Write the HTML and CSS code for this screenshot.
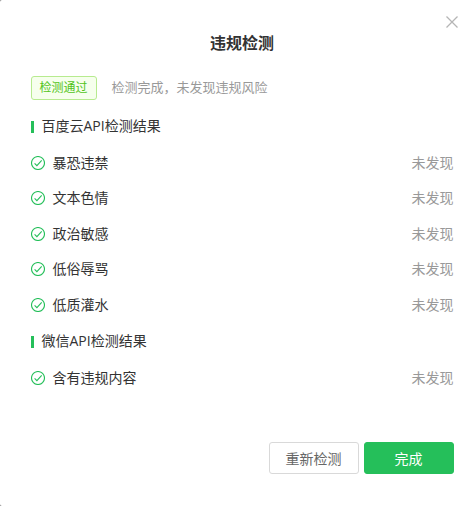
FILE: index.html
```html
<!DOCTYPE html>
<html lang="zh-CN">
<head>
    <meta charset="UTF-8">
    <meta name="viewport" content="width=device-width, initial-scale=1.0">
    <title>违规检测</title>
    <link rel="stylesheet" href="styles.css">
</head>
<body>
    <svg class="sprite" width="0" height="0">
        <symbol id="icon-check" viewBox="0 0 14 14">
            <circle cx="7" cy="7" r="6.5" />
            <path d="M3.6 7.3 L5.9 9.6 L10.7 4.4" />
        </symbol>
    </svg>

    <div class="modal">
        <button class="modal-close" aria-label="关闭">
            <svg width="12" height="12" viewBox="0 0 12 12"><path d="M0.5 0.5 L11.5 11.5 M11.5 0.5 L0.5 11.5" /></svg>
        </button>

        <h1 class="modal-title">违规检测</h1>

        <div class="summary">
            <span class="tag">检测通过</span>
            <span class="summary-text">检测完成，未发现违规风险</span>
        </div>

        <h2 class="section-title">百度云API检测结果</h2>
        <ul class="result-list">
            <li><svg class="icon"><use href="#icon-check" /></svg><span class="name">暴恐违禁</span><span class="status">未发现</span></li>
            <li><svg class="icon"><use href="#icon-check" /></svg><span class="name">文本色情</span><span class="status">未发现</span></li>
            <li><svg class="icon"><use href="#icon-check" /></svg><span class="name">政治敏感</span><span class="status">未发现</span></li>
            <li><svg class="icon"><use href="#icon-check" /></svg><span class="name">低俗辱骂</span><span class="status">未发现</span></li>
            <li><svg class="icon"><use href="#icon-check" /></svg><span class="name">低质灌水</span><span class="status">未发现</span></li>
        </ul>

        <h2 class="section-title">微信API检测结果</h2>
        <ul class="result-list">
            <li><svg class="icon"><use href="#icon-check" /></svg><span class="name">含有违规内容</span><span class="status">未发现</span></li>
        </ul>

        <div class="modal-footer">
            <button class="btn">重新检测</button>
            <button class="btn btn-primary">完成</button>
        </div>
    </div>
</body>
</html>
```
FILE: styles.css
```css
* {
    box-sizing: border-box;
}

body {
    margin: 0;
    background: #7f7f7f;
    font-family: "Open Sans", "Noto Sans CJK SC", sans-serif;
    font-size: 14px;
    color: #333;
}

.sprite {
    position: absolute;
}

.modal {
    position: relative;
    height: 506px;
    padding: 32px 20px 32px 31px;
    display: flex;
    flex-direction: column;
    background: #fff;
    border-radius: 2px 0 0 2px;
}

.modal-close {
    position: absolute;
    top: 16px;
    right: 16px;
    padding: 0;
    border: 0;
    background: none;
    line-height: 0;
}

.modal-close svg {
    fill: none;
    stroke: #b5b5b5;
    stroke-width: 1.3;
}

.modal-title {
    margin: 0 10px 0 0;
    padding-left: 9px;
    font-size: 16px;
    line-height: 22px;
    font-weight: 700;
    text-align: center;
}

.summary {
    display: flex;
    align-items: center;
    margin-top: 22px;
    height: 24px;
}

.tag {
    height: 24px;
    padding: 0 8.5px 0 7.5px;
    border: 1px solid #b7eb8f;
    border-radius: 3px;
    background: #f6ffed;
    color: #52c41a;
    font-size: 12px;
    line-height: 22px;
}

.summary-text {
    margin: 0 0 2px 14.5px;
    font-size: 13px;
    line-height: 22px;
    color: #999;
}

.section-title {
    display: flex;
    align-items: center;
    height: 22px;
    margin: 15px 0 0;
    font-size: 14px;
    font-weight: 400;
    line-height: 22px;
}

.section-title::before {
    content: "";
    width: 3px;
    height: 12px;
    margin: 2px 7.5px 0 0;
    background: #25bf5a;
}

.result-list {
    margin: 8px 0 0;
    padding: 0;
    list-style: none;
}

.result-list li {
    display: flex;
    align-items: center;
    height: 35.5px;
    line-height: 22px;
}

.result-list + .section-title {
    margin-top: 7.5px;
}

.icon {
    width: 14px;
    height: 14px;
    margin-right: 7.5px;
    fill: none;
    stroke: #25bf5a;
    stroke-width: 1.1;
}

.status {
    margin-left: auto;
    padding-right: 0.5px;
    color: #999;
}

.modal-footer {
    display: flex;
    justify-content: flex-end;
    gap: 5px;
    margin-top: auto;
}

.btn {
    width: 90px;
    height: 32px;
    padding: 1px 1px 0 0;
    border: 1px solid #d9d9d9;
    border-radius: 3px;
    background: #fff;
    color: #666;
    font-family: inherit;
    font-size: 14px;
    line-height: 30px;
}

.btn-primary {
    border-color: #25bf5a;
    background: #25bf5a;
    color: #fff;
}
```
